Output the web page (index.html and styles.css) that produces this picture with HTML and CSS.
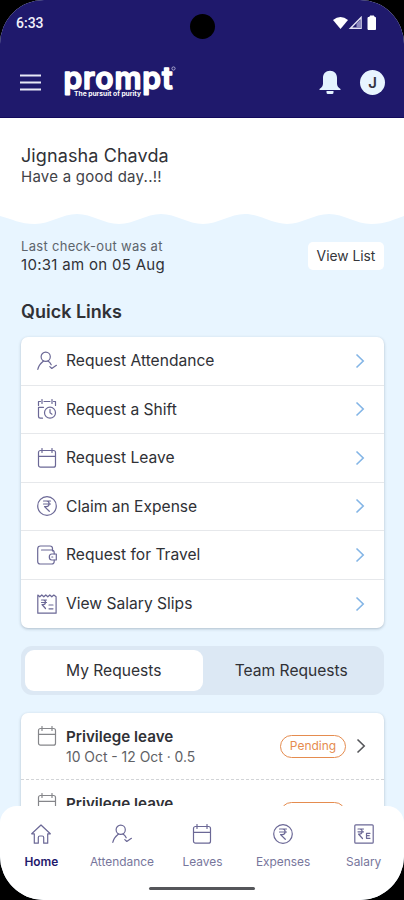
FILE: index.html
```
<!DOCTYPE html>
<html lang="en">

<head>
  <meta charset="utf-8">
  <meta name="viewport" content="width=device-width, initial-scale=1">
  <title>Prompt</title>
  <link rel="stylesheet" href="styles.css">
</head>

<body>
  <!-- shared icons -->
  <svg class="sprite">
    <symbol id="attendance" viewBox="0 0 20 20">
      <circle cx="8.7" cy="5.8" r="4.6" />
      <path d="M.8 18.4C1.5 15 4 12 6.5 10M11 10c1.5.9 2.5 2.1 3.2 3.8M12.8 15.6l2 1.9 4.6-3.2" />
    </symbol>
    <symbol id="calendar" viewBox="0 0 20 20">
      <rect x="1.5" y="2.5" width="17" height="16.7" rx="2" />
      <path d="M1.5 8.3h17M5 .5v4M15 .5v4" />
    </symbol>
    <symbol id="shift" viewBox="0 0 20 20">
      <path d="M5 .5v4M15 .5v4M7 2.500h6M3.500 2.500H1.500v4M16.500 2.500h2v4M1.500 8.300h5M1.500 8.300v9q0 1.900 2 1.900h2" />
      <circle cx="13" cy="13.7" r="5.5" />
      <path d="M13 10.5v3.3l2 1.4" />
    </symbol>
    <symbol id="rupee" viewBox="0 0 20 20">
      <circle cx="10" cy="10" r="9.3" />
      <path d="M6.5 5h7M6.5 8h7M6.8 5h2.5c3.8 0 3.8 5.6 0 5.6H7.5l4.8 4.7" />
    </symbol>
    <symbol id="wallet" viewBox="0 0 20 20">
      <path d="M15.5 6V3.5Q15.5 1 13 1H3.5Q.7 1 .7 4v12.5q0 2.5 2.5 2.5h11.5q2.5 0 2.5-2.5V15M4.5 5h10q2.700 0 2.700 2.700V9" />
      <path d="M19.3 9h-4.500q-2.500 0-2.500 3t2.500 3h4.500zM14.8 12h1" />
    </symbol>
    <symbol id="slip" viewBox="0 0 20 20">
      <path d="M.8 19.2V1l2 1.800 2-1.800 2 1.800 2-1.800 2 1.800 2-1.800 2 1.800 2-1.800 2.300 1.800v16.400z" />
      <path d="M4.5 6h5M4.5 8.500h5M5 6h1.200c3 0 3 4.500 0 4.500H5l3.500 4M12 11h4M12 14.800h4" />
    </symbol>
    <symbol id="salary" viewBox="0 0 20 20">
      <rect x=".8" y=".8" width="18.4" height="18.4" rx="1" />
      <path d="M4 5h5.500M4 7.800h5.500M4.500 5h1.200c3.200 0 3.200 5 0 5H4.500l4 4.500M16 9.300h-3.500v5H16M12.500 11.700h2.700" />
    </symbol>
    <symbol id="home" viewBox="0 0 20 20">
      <path d="M.7 9.800L10 1l9.300 8.800h-2.600v9.400h-4v-5.700q0-1.500-1.500-1.500H8.800q-1.500 0-1.500 1.500v5.700h-4V9.800z" />
    </symbol>
    <symbol id="chevron" viewBox="0 0 10 16">
      <path d="M1.5 1.500L8.200 8l-6.700 6.500" />
    </symbol>
  </svg>

  <div class="phone">
    <div class="camera"></div>
    <header class="header">
      <div class="status">
        <span>6:33</span>
        <svg width="44" height="16" viewBox="0 0 44 16">
          <path d="M0 5Q7.500-1 15 5L7.500 14z" fill="#fff" />
          <path d="M17.500 13.200L28 2.500v10.700z" fill="none" stroke="#e4e2f3" stroke-width="1.5" />
          <path d="M23.500 8.500L28 4v9h-4.500z" fill="#8d89bd" />
          <path d="M37 1h4v1.500h1.500v12h-7.500v-12h2z" fill="#fff" stroke="#fff" stroke-linejoin="round" />
        </svg>
      </div>
      <div class="topbar">
        <svg width="21" height="17" viewBox="0 0 21 17">
          <path d="M0 1.500h21M0 8.500h21M0 15.500h21" stroke="#e8e8f6" stroke-width="2" />
        </svg>
        <svg class="logo" width="114" height="36" viewBox="0 0 114 36">
          <text class="logo-name" x="0.5" y="25" textLength="109" lengthAdjust="spacing">prompt</text>
          <text class="logo-tag" x="11" y="32" textLength="67" lengthAdjust="spacingAndGlyphs">The pursuit of purity</text>
          <circle cx="110.500" cy="4.500" r="1.600" fill="none" stroke="#aaa7cf" />
        </svg>
        <svg class="bell" width="22" height="25" viewBox="0 0 22 25">
          <path d="M11 .8c4.300 0 7 3 7 7v5.500c0 2.700 1 4 3.500 5.700v1H.5v-1C3 17.300 4 16 4 13.300V7.800c0-4 2.700-7 7-7zM7.500 21h7v1.500q0 1.500-1.500 1.500H9q-1.500 0-1.500-1.500z" fill="#e4f3ff" />
        </svg>
        <div class="avatar">J</div>
      </div>
    </header>

    <section class="greeting">
      <div class="name">Jignasha Chavda</div>
      <div class="wish">Have a good day..!!</div>
    </section>
    <svg class="wave" width="404" height="12" viewBox="0 0 404 12">
      <path d="M0 0V3C12 6 20 11 35 11S62 1 77 1s27 10 42 10 27-10 42-10 27 10 42 10 27-10 42-10 27 10 42 10 27-10 42-10 27 10 42 10S395 6 404 3V0z" fill="#fff" />
    </svg>

    <main class="content">
      <div class="checkout">
        <div>
          <div class="checkout-label">Last check-out was at</div>
          <div class="checkout-time">10:31 am on 05 Aug</div>
        </div>
        <button class="view-list">View List</button>
      </div>

      <h2>Quick Links</h2>
      <ul class="card links">
        <li><svg class="icon"><use href="#attendance" /></svg><span>Request Attendance</span><svg class="chevron"><use href="#chevron" /></svg></li>
        <li><svg class="icon"><use href="#shift" /></svg><span>Request a Shift</span><svg class="chevron"><use href="#chevron" /></svg></li>
        <li><svg class="icon"><use href="#calendar" /></svg><span>Request Leave</span><svg class="chevron"><use href="#chevron" /></svg></li>
        <li><svg class="icon"><use href="#rupee" /></svg><span>Claim an Expense</span><svg class="chevron"><use href="#chevron" /></svg></li>
        <li><svg class="icon"><use href="#wallet" /></svg><span>Request for Travel</span><svg class="chevron"><use href="#chevron" /></svg></li>
        <li><svg class="icon"><use href="#slip" /></svg><span>View Salary Slips</span><svg class="chevron"><use href="#chevron" /></svg></li>
      </ul>

      <div class="tabs">
        <div class="tab active">My Requests</div>
        <div class="tab">Team Requests</div>
      </div>

      <div class="card requests">
        <div class="request">
          <svg class="icon gray"><use href="#calendar" /></svg>
          <div class="request-text">
            <div class="request-title">Privilege leave</div>
            <div class="request-date">10 Oct - 12 Oct · 0.5</div>
          </div>
          <span class="badge">Pending</span>
          <svg class="chevron dark"><use href="#chevron" /></svg>
        </div>
        <div class="request">
          <svg class="icon gray"><use href="#calendar" /></svg>
          <div class="request-text">
            <div class="request-title">Privilege leave</div>
          </div>
          <span class="badge">Pending</span>
          <svg class="chevron dark"><use href="#chevron" /></svg>
        </div>
      </div>
    </main>

    <nav class="nav">
      <div class="nav-items">
        <a class="nav-item active"><svg class="icon"><use href="#home" /></svg>Home</a>
        <a class="nav-item"><svg class="icon"><use href="#attendance" /></svg>Attendance</a>
        <a class="nav-item"><svg class="icon"><use href="#calendar" /></svg>Leaves</a>
        <a class="nav-item"><svg class="icon"><use href="#rupee" /></svg>Expenses</a>
        <a class="nav-item"><svg class="icon"><use href="#salary" /></svg>Salary</a>
      </div>
      <div class="handle"></div>
    </nav>
  </div>
</body>

</html>
```

FILE: styles.css
```
* {
  box-sizing: border-box;
}

body {
  margin: 0;
  background: #000;
  font-family: Inter, "Liberation Sans", sans-serif;
  color: #303136;
}

.sprite {
  display: none;
}

.phone {
  position: relative;
  width: 404px;
  height: 900px;
  overflow: hidden;
  border-radius: 44px;
  background: #e8f5ff;
}

.camera {
  position: absolute;
  left: 190px;
  top: 14px;
  width: 25px;
  height: 25px;
  border-radius: 50%;
  background: #000;
}

/* header */

.header {
  height: 118px;
  background: #1f196c;
  border-bottom: 1px solid #120a5c;
}

.status {
  display: flex;
  justify-content: space-between;
  align-items: center;
  height: 46px;
  padding: 0 27px 0 16px;
  color: #f1f0fa;
  font: 500 14px Roboto, sans-serif;
}

.topbar {
  display: flex;
  align-items: center;
  height: 72px;
  padding: 0 19px 0 20px;
}

.logo {
  margin: 0 auto 0 22px;
  overflow: visible;
}

.logo-name {
  font: 600 30px Inter, sans-serif;
  fill: #fff;
  stroke: #fff;
  stroke-width: 1.5px;
  stroke-linejoin: round;
}

.logo-tag {
  font: 700 6.5px Inter, sans-serif;
  fill: #fff;
}

.bell {
  margin-right: 19px;
}

.avatar {
  width: 25px;
  height: 25px;
  border-radius: 50%;
  background: #e8f5ff;
  color: #34343f;
  font-size: 15px;
  font-weight: 600;
  line-height: 25px;
  text-align: center;
}

/* greeting */

.greeting {
  height: 95px;
  padding: 27px 21px 0;
  background: #fff;
}

.name {
  font-size: 18px;
  line-height: 22px;
  letter-spacing: 0.1px;
}

.wish {
  font-size: 15px;
  line-height: 20px;
  letter-spacing: 0.25px;
  color: #424348;
}

.wave {
  display: block;
}

.content {
  padding: 13px 20px 0 21px;
}

.checkout {
  display: flex;
  justify-content: space-between;
}

.checkout-label {
  font-size: 13px;
  line-height: 17px;
  letter-spacing: 0.3px;
  color: #5d646c;
}

.checkout-time {
  font-size: 15px;
  line-height: 19px;
  letter-spacing: 0.3px;
}

.view-list {
  height: 28px;
  width: 76px;
  margin-top: 4px;
  padding: 0;
  border: 0;
  border-radius: 5px;
  background: #fff;
  color: #35363b;
  font: 13.8px Inter, sans-serif;
}

h2 {
  margin: 27px 0 14px;
  font-size: 18px;
  line-height: 22px;
  font-weight: 600;
}

.card {
  border-radius: 7px;
  background: #fff;
  box-shadow: 0 1px 3px rgba(40, 60, 80, 0.3);
}

.links {
  margin: 0;
  padding: 0;
  list-style: none;
}

.links li {
  display: flex;
  align-items: center;
  height: 48.5px;
  padding: 0 19px 0 16px;
  border-bottom: 1px solid #e6e8eb;
  font-size: 15.6px;
}

.links li:last-child {
  border-bottom: 0;
}

.icon {
  width: 20px;
  height: 20px;
  fill: none;
  stroke: #6b6896;
  stroke-width: 1.2;
  stroke-linecap: round;
  stroke-linejoin: round;
}

.icon.gray {
  stroke: #85868a;
}

.links .icon {
  margin-right: 9px;
}

.chevron {
  width: 10px;
  height: 16px;
  margin-left: auto;
  fill: none;
  stroke: #83b5e6;
  stroke-width: 1.6;
}

.chevron.dark {
  margin-left: 10px;
  stroke: #55565a;
}

/* requests */

.tabs {
  display: flex;
  height: 49px;
  margin: 18px 0;
  padding: 4px;
  border-radius: 11px;
  background: #dce8f4;
}

.tab {
  flex: 1;
  border-radius: 9px;
  font-size: 15.6px;
  line-height: 41px;
  text-align: center;
}

.tab.active {
  background: #fff;
}

.request {
  display: flex;
  height: 67px;
  padding: 13px 18px 0 16px;
  border-bottom: 1px dashed #d2d4d7;
}

.request-text {
  margin: 1px auto 0 9px;
}

.request-title {
  font-size: 15.2px;
  line-height: 20px;
  font-weight: 600;
}

.request-date {
  font-size: 13.9px;
  line-height: 20px;
  color: #606165;
}

.badge {
  width: 66px;
  height: 23px;
  margin-top: 9px;
  border: 1.5px solid #e58c4f;
  border-radius: 12px;
  color: #e58c4f;
  font-size: 12px;
  line-height: 20px;
  text-align: center;
}

.request .chevron {
  margin-top: 12px;
}

/* bottom navigation */

.nav {
  position: absolute;
  left: 0;
  bottom: 0;
  width: 100%;
  height: 94px;
  border-radius: 17px 17px 0 0;
  background: #fff;
}

.nav-items {
  display: flex;
  padding: 18px 0 0 1px;
}

.nav-item {
  display: flex;
  flex: 1;
  flex-direction: column;
  align-items: center;
  gap: 10px;
  color: #77769c;
  font-size: 11.9px;
  line-height: 15px;
}

.nav-item.active {
  color: #1f196c;
  font-weight: 600;
}

.handle {
  width: 106px;
  height: 3px;
  margin: 18px auto 0;
  border-radius: 2px;
  background: #55565a;
}
```
